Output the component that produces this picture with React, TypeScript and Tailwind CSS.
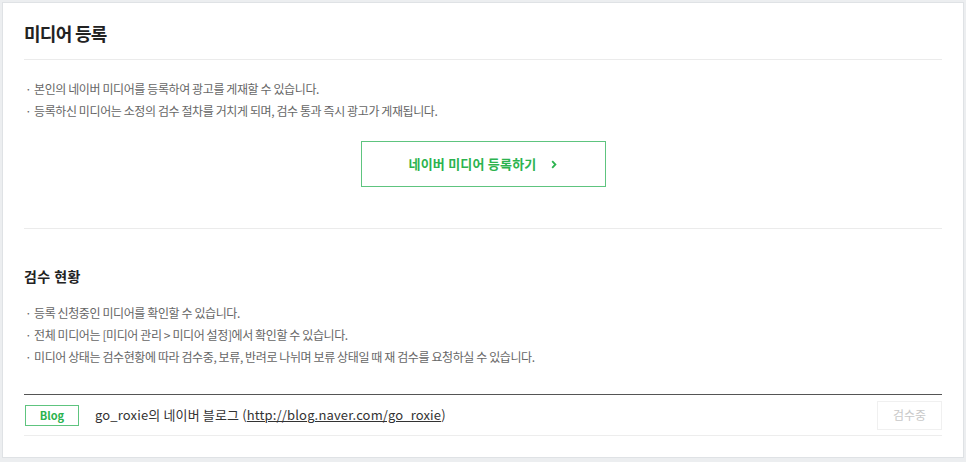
import React from "react"

const font = { fontFamily: '"Noto Sans CJK KR", "Noto Sans", sans-serif' }

function Bullets({ items }: { items: string[] }) {
  return (
    <ul className="text-[12px] leading-[22px] tracking-[-0.4px] text-[#666]">
      {items.map((t) => (
        <li key={t} className="flex">
          <span className="w-[10px] shrink-0 pl-[1px]">·</span>
          <span>{t}</span>
        </li>
      ))}
    </ul>
  )
}

export default function App() {
  return (
    <div className="h-[462px] bg-[#eceef0] px-[2px] pt-[2px]" style={font}>
      <div className="h-[456px] border border-[#dfe2e5] bg-white px-[21px]">
        <div className="border-b border-[#ebebeb] pt-[18px] pb-[14px] text-[18px] font-bold leading-[24px] tracking-[-0.7px] text-[#222]">
          미디어 등록
        </div>

        <div className="border-b border-[#ebebeb] pt-[18px] pb-[41px]">
          <Bullets
            items={[
              "본인의 네이버 미디어를 등록하여 광고를 게재할 수 있습니다.",
              "등록하신 미디어는 소정의 검수 절차를 거치게 되며, 검수 통과 즉시 광고가 게재됩니다.",
            ]}
          />
          <button className="mx-auto mt-[19px] flex h-[46px] w-[245px] items-center justify-center gap-[14px] border border-[#5ec47f] bg-white text-[13px] font-bold tracking-[0.2px] text-[#2cb34f]">
            <span>네이버 미디어 등록하기</span>
            <svg width="6" height="9" viewBox="0 0 6 9" className="ml-[1px]">
              <path d="M1.2 1.2 L4.4 4.5 L1.2 7.8" fill="none" stroke="#2cb34f" strokeWidth="1.8" />
            </svg>
          </button>
        </div>

        <div className="mt-[37px] text-[14px] font-bold leading-[20px] tracking-[0.4px] text-[#222]">검수 현황</div>

        <div className="mt-[16px]">
          <Bullets
            items={[
              "등록 신청중인 미디어를 확인할 수 있습니다.",
              "전체 미디어는 [미디어 관리 > 미디어 설정]에서 확인할 수 있습니다.",
              "미디어 상태는 검수현황에 따라 검수중, 보류, 반려로 나뉘며 보류 상태일 때 재 검수를 요청하실 수 있습니다.",
            ]}
          />
        </div>

        <div className="mt-[26px] border-t border-[#555]">
          <div className="flex h-[41px] items-center border-b border-[#ededed]">
            <span className="ml-[1px] flex h-[21px] w-[54px] items-center justify-center border border-[#5ec47f] text-[11px] font-bold text-[#2cb34f]">
              Blog
            </span>
            <span className="ml-[16px] text-[13px] tracking-[0.15px] text-[#333]">
              go_roxie의 네이버 블로그 (<span className="underline">http://blog.naver.com/go_roxie</span>)
            </span>
            <button className="ml-auto h-[29px] w-[65px] border border-[#f0f0f0] bg-white text-[12px] text-[#c8c8c8]">
              검수중
            </button>
          </div>
        </div>
      </div>
    </div>
  )
}
